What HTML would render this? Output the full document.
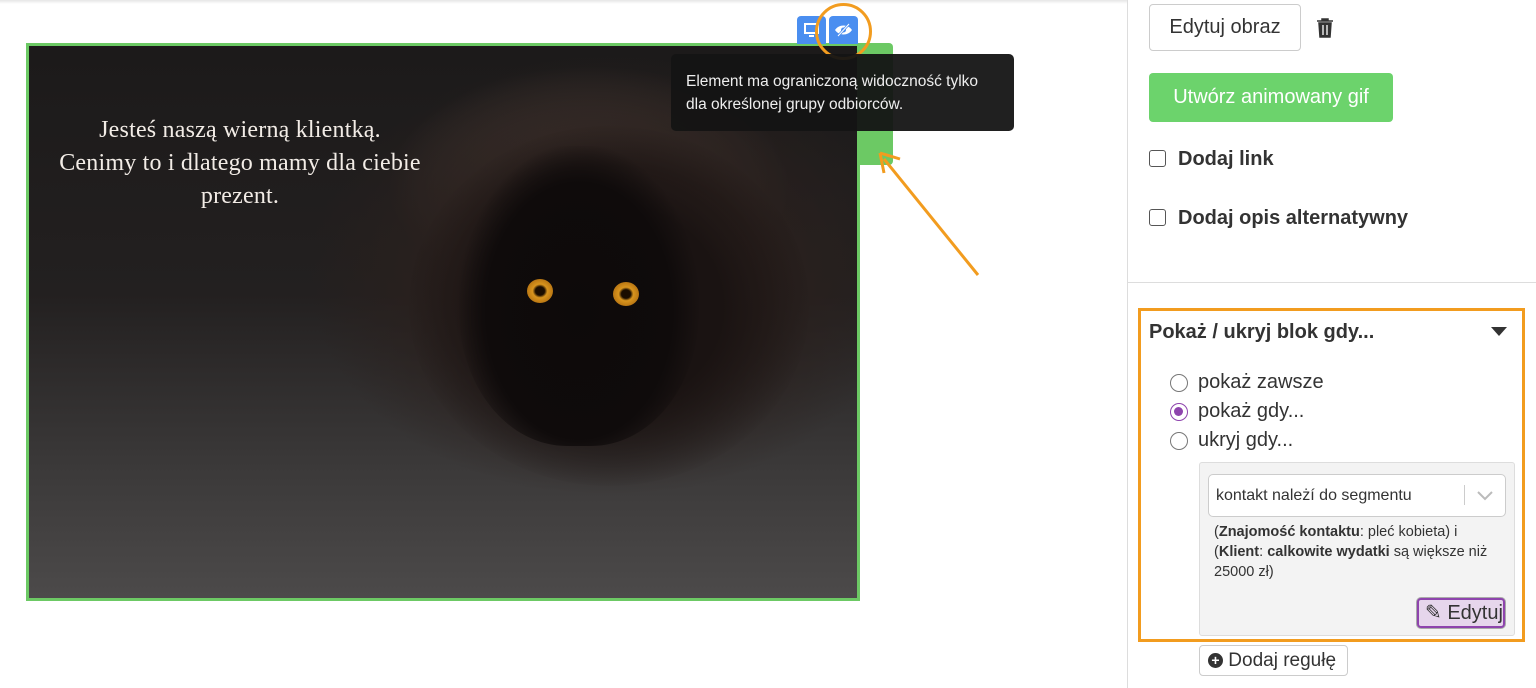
<!DOCTYPE html>
<html><head><meta charset="utf-8"><style>
*{margin:0;padding:0;box-sizing:border-box}
body{width:1536px;height:688px;overflow:hidden;background:#fff;font-family:"Liberation Sans","DejaVu Sans",sans-serif;position:relative;color:#333}
.abs{position:absolute}
.top{left:0;top:0;width:1128px;height:4px;background:linear-gradient(#e6e6e6,#fff)}
.frame{left:26px;top:43px;width:834px;height:558px;border:3px solid #6cc964;overflow:hidden;
background:
radial-gradient(ellipse 300px 220px at 580px 230px,#3a2b26 0%,#2a201d 50%,rgba(30,25,24,0) 100%),
radial-gradient(ellipse 200px 120px at 560px 140px,#5c4a42 0%,rgba(60,50,45,0) 100%),
linear-gradient(180deg,#1c1a1a 0%,#232020 45%,#3a3838 75%,#4c4a4a 100%)}
.tab{left:855px;top:43px;width:38px;height:122px;background:#6cc964;border-radius:0 4px 4px 0}
.tip{left:671px;top:54px;width:343px;height:77px;background:rgba(20,20,20,.95);border-radius:5px;color:#eee;font-size:15.5px;line-height:23px;padding:16px 15px}
.ib{top:16px;width:29px;height:28px;background:#4a8ef0;border-radius:4px 4px 0 0}
.circ{left:815px;top:3px;width:57px;height:57px;border:3px solid #f29c1f;border-radius:50%}
.cattext{left:29px;top:114px;width:422px;text-align:center;color:#f2ece6;font-family:"Liberation Serif",serif;font-size:24px;line-height:33px;font-weight:bold;font-weight:500;letter-spacing:0.2px}
.vline{left:1127px;top:0;width:1px;height:688px;background:#ddd}
.hline{left:1128px;top:282px;width:408px;height:1px;background:#ddd}
.btn{border:1px solid #ccc;border-radius:4px;background:#fff;font-size:20px;color:#333}
.lbl{font-weight:bold;font-size:20px;color:#333}
.cb{width:17px;height:17px;border:1.5px solid #555;border-radius:3px;background:#fff}
.box{left:1138px;top:308px;width:387px;height:334px;border:3px solid #f29c1f}
.radio{width:18px;height:18px;border:1.5px solid #777;border-radius:50%;background:#fff}
.rt{font-size:20px;color:#333}
</style></head><body>
<div class="abs top"></div>
<div class="abs tab"></div>
<div class="abs frame">
 <div class="abs" style="left:380px;top:80px;width:400px;height:360px;border-radius:50%;background:radial-gradient(ellipse at 50% 50%,#1a1312 0%,#1a1312 40%,rgba(26,19,18,0) 72%)"></div>
 <div class="abs" style="left:430px;top:100px;width:240px;height:300px;border-radius:45%;background:radial-gradient(ellipse at 50% 55%,#0d0a0a 0%,#0f0b0b 55%,rgba(14,11,11,0) 72%)"></div>
 <div class="abs" style="left:498px;top:233px;width:26px;height:24px;border-radius:50%;background:radial-gradient(#1a0d00 25%,#d9951e 40%,#b06e10 80%)"></div>
 <div class="abs" style="left:584px;top:236px;width:26px;height:24px;border-radius:50%;background:radial-gradient(#1a0d00 25%,#d9951e 40%,#b06e10 80%)"></div>
</div>
<div class="abs cattext">Jesteś naszą wierną klientką.<br>Cenimy to i dlatego mamy dla ciebie<br>prezent.</div>
<div class="abs ib" style="left:797px"><svg width="29" height="28"><rect x="8" y="8" width="13" height="9" fill="none" stroke="#fff" stroke-width="2"/><path d="M12 20h5" stroke="#fff" stroke-width="2"/></svg></div>
<div class="abs ib" style="left:829px"><svg width="29" height="28"><path d="M6 14c4-6 13-6 17 0c-4 6-13 6-17 0z" fill="#fff"/><circle cx="14.5" cy="14" r="2.5" fill="#4a8ef0"/><path d="M9 20L20 8" stroke="#4a8ef0" stroke-width="2.5"/><path d="M9 20L20 8" stroke="#fff" stroke-width="1"/></svg></div>
<div class="abs circ"></div>
<div class="abs tip">Element ma ograniczoną widoczność tylko<br>dla określonej grupy odbiorców.</div>
<svg class="abs" style="left:870px;top:145px" width="120" height="140"><path d="M108 130L14 14" stroke="#f29c1f" stroke-width="3"/><path d="M10 8l4 20M10 8l20 6" stroke="#f29c1f" stroke-width="3" fill="none"/></svg>
<div class="abs vline"></div>
<div class="abs hline"></div>
<div class="abs btn" style="left:1149px;top:4px;width:152px;height:47px;line-height:45px;text-align:center">Edytuj obraz</div>
<svg class="abs" style="left:1315px;top:17px" width="20" height="22"><path d="M2 4h16M7 4V2h6v2M4 6l1 14h10l1-14z" fill="#333" stroke="#333" stroke-width="1.5"/><path d="M8 8v10M12 8v10" stroke="#fff" stroke-width="1.3"/></svg>
<div class="abs" style="left:1149px;top:73px;width:244px;height:49px;background:#6cd36c;border-radius:4px;color:#fff;font-size:20px;line-height:49px;text-align:center">Utwórz animowany gif</div>
<div class="abs cb" style="left:1149px;top:150px"></div><div class="abs lbl" style="left:1178px;top:148px">Dodaj link</div>
<div class="abs cb" style="left:1149px;top:209px"></div><div class="abs lbl" style="left:1178px;top:207px">Dodaj opis alternatywny</div>
<div class="abs box"></div>
<div class="abs lbl" style="left:1149px;top:321px">Pokaż / ukryj blok gdy...</div>
<svg class="abs" style="left:1491px;top:327px" width="16" height="10"><path d="M0 0h16L8 9z" fill="#333"/></svg>
<div class="abs radio" style="left:1170px;top:374px"></div><div class="abs rt" style="left:1198px;top:371px">pokaż zawsze</div>
<div class="abs radio" style="left:1170px;top:403px;border-color:#8e44ad"><div style="margin:3px;width:9px;height:9px;border-radius:50%;background:#8e44ad"></div></div><div class="abs rt" style="left:1198px;top:400px">pokaż gdy...</div>
<div class="abs radio" style="left:1170px;top:432px"></div><div class="abs rt" style="left:1198px;top:429px">ukryj gdy...</div>
<div class="abs" style="left:1199px;top:462px;width:316px;height:174px;background:#f3f3f3;border:1px solid #ddd;border-radius:3px"></div>
<div class="abs" style="left:1208px;top:474px;width:298px;height:43px;background:#fff;border:1px solid #ccc;border-radius:5px;font-size:16px;line-height:41px;padding-left:7px">kontakt należí do segmentu<span style="position:absolute;left:255px;top:10px;width:1px;height:20px;background:#ccc"></span><svg style="position:absolute;left:267px;top:15px" width="18" height="12"><path d="M2 2l7 7 7-7" stroke="#bbb" stroke-width="2" fill="none"/></svg></div>
<div class="abs" style="left:1214px;top:522px;width:295px;font-size:14.5px;line-height:20px;color:#333">(<b>Znajomość kontaktu</b>: pleć kobieta) i<br>(<b>Klient</b>: <b>calkowite wydatki</b> są większe niż<br>25000 zł)</div>
<div class="abs" style="left:1417px;top:598px;width:88px;height:30px;border:2px solid #8e44ad;border-radius:4px;background:#e6d6ec;font-size:20px;line-height:26px;padding-left:6px;box-shadow:0 0 0 1px #aaa">✎ Edytuj</div>
<div class="abs btn" style="left:1199px;top:645px;width:149px;height:31px;font-size:19px;line-height:29px;padding-left:8px"><span style="display:inline-block;width:15px;height:15px;border-radius:50%;background:#333;color:#fff;font-size:14px;line-height:15px;text-align:center;font-weight:bold;vertical-align:1px">+</span> Dodaj regułę</div>
</body></html>
